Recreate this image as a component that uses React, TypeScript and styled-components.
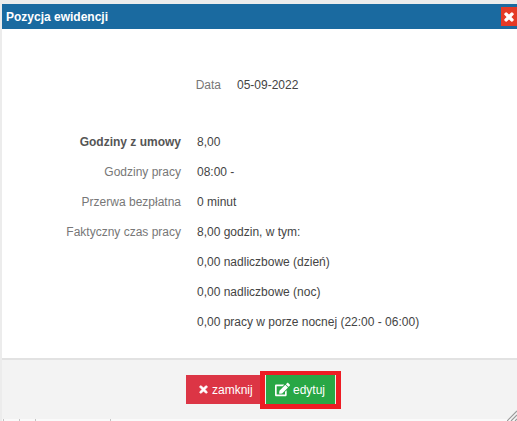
import React from "react";
import styled, { createGlobalStyle } from "styled-components";
import { FaTimes, FaEdit } from "react-icons/fa";

const GlobalStyle = createGlobalStyle`
  html, body {
    margin: 0;
    padding: 0;
    background: #ececec;
    overflow: hidden;
  }
  body {
    font-family: "Liberation Sans", Arial, sans-serif;
    font-size: 12px;
  }
`;

const rows = [
  { label: "Godziny z umowy", value: "8,00", strong: true },
  { label: "Godziny pracy", value: "08:00 -" },
  { label: "Przerwa bezpłatna", value: "0 minut" },
  { label: "Faktyczny czas pracy", value: "8,00 godzin, w tym:" },
  { label: "", value: "0,00 nadliczbowe (dzień)" },
  { label: "", value: "0,00 nadliczbowe (noc)" },
  { label: "", value: "0,00 pracy w porze nocnej (22:00 - 06:00)" },
];

export default function App() {
  return (
    <>
      <GlobalStyle />
      <StPage>
        <StDialog>
          <StHeader>
            <StTitle>Pozycja ewidencji</StTitle>
            <StClose>
              <FaTimes size={12} stroke="currentColor" strokeWidth={50} />
            </StClose>
          </StHeader>
          <StBody>
            <StRow $indent={40}>
              <StLabel>Data</StLabel>
              <StValue>05-09-2022</StValue>
            </StRow>
            <StRows>
              {rows.map((row) => (
                <StRow key={row.value}>
                  <StLabel $strong={row.strong}>{row.label}</StLabel>
                  <StValue>{row.value}</StValue>
                </StRow>
              ))}
            </StRows>
          </StBody>
          <StFooter>
            <StCloseButton>
              <FaTimes size={11} stroke="currentColor" strokeWidth={40} />
              zamknij
            </StCloseButton>
            <StHighlight>
              <StEditButton>
                <FaEdit size={15} />
                edytuj
              </StEditButton>
            </StHighlight>
          </StFooter>
        </StDialog>
        <StBottomEdge />
        <StResizeHandle width="10" height="11" viewBox="0 0 10 11">
          <path d="M0 11 L10 1 M4 11 L10 5 M8 11 L10 9" stroke="#9a9a9a" strokeWidth="1.2" fill="none" />
        </StResizeHandle>
      </StPage>
    </>
  );
}

const StPage = styled.div`
  position: relative;
  width: 517px;
  height: 421px;
  padding: 4px 0 0 2px;
  box-sizing: border-box;
`;

const StDialog = styled.div`
  display: flex;
  flex-direction: column;
  height: 415px;
  background: #fff;
`;

const StHeader = styled.div`
  display: flex;
  align-items: center;
  justify-content: space-between;
  height: 25px;
  flex-shrink: 0;
  background: #1a6aa0;
`;

const StTitle = styled.div`
  padding-left: 4px;
  color: #fff;
  font-size: 12px;
  font-weight: bold;
`;

const StClose = styled.div`
  display: flex;
  align-items: center;
  justify-content: center;
  width: 16px;
  height: 19px;
  color: #fff;
  background: #e43a26;
`;

const StBody = styled.div`
  flex: 1;
  padding-top: 49px;
  border-bottom: 2px solid #e2e2e2;
`;

const StRows = styled.div`
  display: flex;
  flex-direction: column;
  gap: 16px;
  margin-top: 43px;
`;

const StRow = styled.div<{ $indent?: number }>`
  display: flex;
  gap: 16px;
  height: 14px;
  padding-left: ${(p) => p.$indent ?? 0}px;
  line-height: 14px;
  white-space: nowrap;
`;

const StLabel = styled.div<{ $strong?: boolean }>`
  width: 179px;
  text-align: right;
  color: ${(p) => (p.$strong ? "#555" : "#777")};
  font-weight: ${(p) => (p.$strong ? "bold" : "normal")};
`;

const StValue = styled.div`
  color: #444;
`;

const StFooter = styled.div`
  display: flex;
  align-items: flex-start;
  justify-content: center;
  height: 59px;
  flex-shrink: 0;
  padding: 11px 0 0 8px;
  box-sizing: border-box;
  background: #f3f3f3;
`;

const StHighlight = styled.div`
  display: flex;
  border-style: solid;
  border-color: #ed1c24;
  border-width: 4px 5px 5px;
`;

const StCloseButton = styled.div`
  display: flex;
  align-items: center;
  gap: 3px;
  width: 74px;
  height: 29px;
  margin-top: 4px;
  padding-left: 12px;
  box-sizing: border-box;
  color: #fff;
  font-size: 12px;
  background: #dc3545;
`;

const StEditButton = styled.div`
  display: flex;
  align-items: center;
  gap: 3px;
  width: 71px;
  height: 29px;
  padding-left: 9px;
  box-sizing: border-box;
  color: #fff;
  font-size: 12px;
  background: #28a745;
  border-left: 1px solid #e8f5ea;
  border-right: 1px solid #e8f5ea;
`;

const StBottomEdge = styled.div`
  height: 2px;
  background-color: #fafafa;
  background-image: linear-gradient(#c4c4c4, #c4c4c4), linear-gradient(#c4c4c4, #c4c4c4),
    linear-gradient(#c4c4c4, #c4c4c4), linear-gradient(#c4c4c4, #c4c4c4);
  background-repeat: no-repeat;
  background-size: 1px 2px;
  background-position: 1px 0, 17px 0, 33px 0, 108px 0;
`;

const StResizeHandle = styled.svg`
  position: absolute;
  right: 0;
  bottom: 0;
`;
